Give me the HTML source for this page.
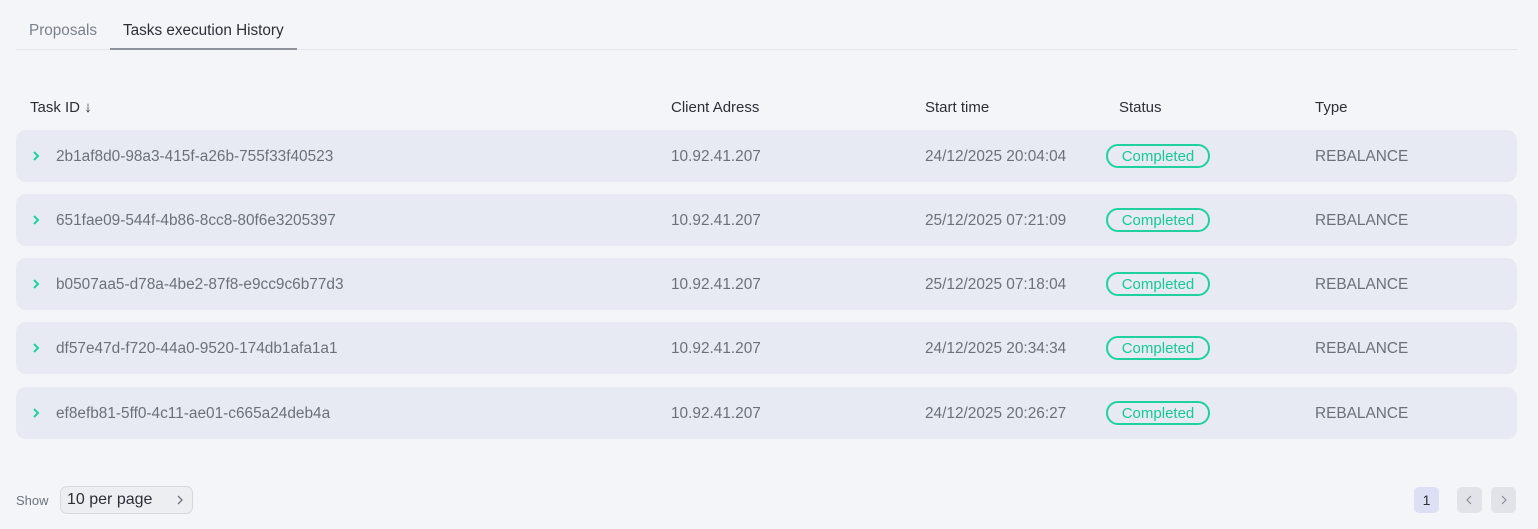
<!DOCTYPE html>
<html><head><style>
body{margin:0;width:1538px;height:529px;background:#f4f5f9;font-family:"Liberation Sans",sans-serif;position:relative;overflow:hidden}
.a{position:absolute}
.tab{font-size:15.3px;top:22px;line-height:17px}
.hd{top:99px;font-size:15px;line-height:17px;color:#2b2f36}
.row{position:absolute;left:16px;width:1501px;height:52px;background:#e8eaf3;border-radius:10px}
.row span{position:absolute;top:18px;font-size:15.4px;line-height:17px;color:#6a717b}
.badge{position:absolute;left:1090px;top:14px;width:100px;height:20px;border:2px solid #1fd1a0;border-radius:12px;color:#16c896;font-size:15px;text-align:center;line-height:21px}
.chev{position:absolute;left:15px;top:20px}
.pb{position:absolute;top:487px;width:25px;height:26px;border-radius:5px;background:#e2e3e8}
</style></head><body>
<div class="a tab" style="left:29px;color:#7a818b">Proposals</div>
<div class="a tab" style="left:123px;color:#2b2f36">Tasks execution History</div>
<div class="a" style="left:16px;top:49px;width:1501px;height:1px;background:#e3e5ea"></div>
<div class="a" style="left:110px;top:48px;width:187px;height:2px;background:#8f949c"></div>
<div class="a hd" style="left:30px">Task ID <span style="font-size:15px">↓</span></div>
<div class="a hd" style="left:671px">Client Adress</div>
<div class="a hd" style="left:925px">Start time</div>
<div class="a hd" style="left:1119px">Status</div>
<div class="a hd" style="left:1315px">Type</div>

<div class="row" style="top:130px"><svg class="chev" width="10" height="12"><path d="M3 2l4 4-4 4" stroke="#1fd1a0" stroke-width="2" fill="none"/></svg><span style="left:40px">2b1af8d0-98a3-415f-a26b-755f33f40523</span><span style="left:655px">10.92.41.207</span><span style="left:909px">24/12/2025 20:04:04</span><div class="badge">Completed</div><span style="left:1299px">REBALANCE</span></div>
<div class="row" style="top:194px"><svg class="chev" width="10" height="12"><path d="M3 2l4 4-4 4" stroke="#1fd1a0" stroke-width="2" fill="none"/></svg><span style="left:40px">651fae09-544f-4b86-8cc8-80f6e3205397</span><span style="left:655px">10.92.41.207</span><span style="left:909px">25/12/2025 07:21:09</span><div class="badge">Completed</div><span style="left:1299px">REBALANCE</span></div>
<div class="row" style="top:258px"><svg class="chev" width="10" height="12"><path d="M3 2l4 4-4 4" stroke="#1fd1a0" stroke-width="2" fill="none"/></svg><span style="left:40px">b0507aa5-d78a-4be2-87f8-e9cc9c6b77d3</span><span style="left:655px">10.92.41.207</span><span style="left:909px">25/12/2025 07:18:04</span><div class="badge">Completed</div><span style="left:1299px">REBALANCE</span></div>
<div class="row" style="top:322px"><svg class="chev" width="10" height="12"><path d="M3 2l4 4-4 4" stroke="#1fd1a0" stroke-width="2" fill="none"/></svg><span style="left:40px">df57e47d-f720-44a0-9520-174db1afa1a1</span><span style="left:655px">10.92.41.207</span><span style="left:909px">24/12/2025 20:34:34</span><div class="badge">Completed</div><span style="left:1299px">REBALANCE</span></div>
<div class="row" style="top:387px"><svg class="chev" width="10" height="12"><path d="M3 2l4 4-4 4" stroke="#1fd1a0" stroke-width="2" fill="none"/></svg><span style="left:40px">ef8efb81-5ff0-4c11-ae01-c665a24deb4a</span><span style="left:655px">10.92.41.207</span><span style="left:909px">24/12/2025 20:26:27</span><div class="badge">Completed</div><span style="left:1299px">REBALANCE</span></div>

<div class="a" style="left:16px;top:493px;font-size:13px;color:#6c737d">Show</div>
<div class="a" style="left:60px;top:486px;width:131px;height:26px;border:1px solid #d6d8de;border-radius:7px;background:#eceef2"></div>
<div class="a" style="left:67px;top:491px;font-size:16px;line-height:18px;color:#2b2f36">10 per page</div>
<svg class="a" style="left:175px;top:494px" width="10" height="12"><path d="M3 2l4 4-4 4" stroke="#6c737d" stroke-width="1.3" fill="none"/></svg>
<div class="pb" style="left:1414px;background:#dde0f5;font-size:14px;color:#2b2f36;text-align:center;line-height:26px">1</div>
<div class="pb" style="left:1457px"><svg width="25" height="26"><path d="M14 9l-4 4 4 4" stroke="#8a8f97" stroke-width="1.2" fill="none"/></svg></div>
<div class="pb" style="left:1491px"><svg width="25" height="26"><path d="M11 9l4 4-4 4" stroke="#8a8f97" stroke-width="1.2" fill="none"/></svg></div>
</body></html>
